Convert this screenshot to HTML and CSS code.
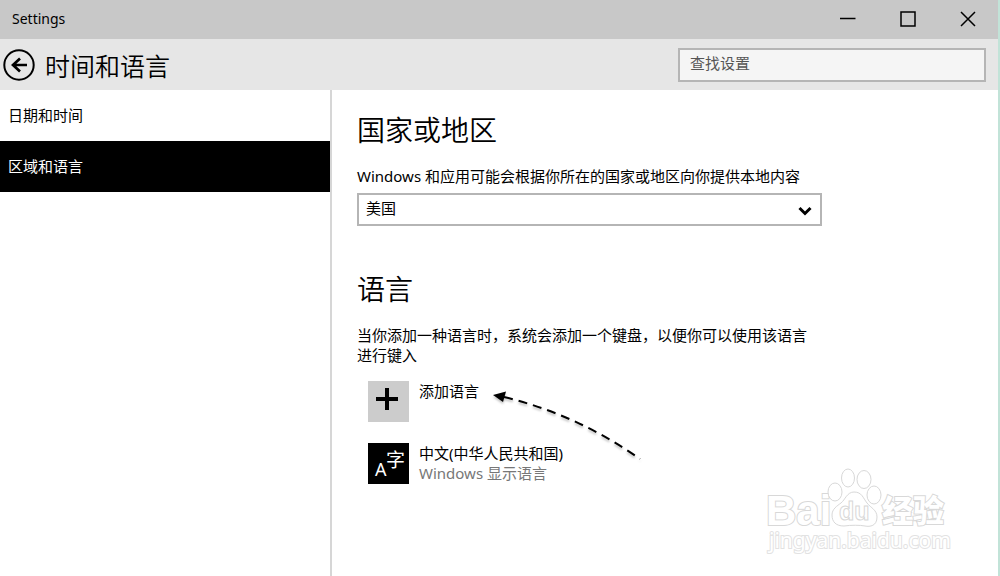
FILE: index.html
```html
<!DOCTYPE html>
<html lang="zh-CN">
<head>
    <meta charset="UTF-8">
    <meta name="viewport" content="width=device-width, initial-scale=1.0">
    <title>Settings</title>
    <link rel="stylesheet" href="styles.css">
</head>
<body>
    <div class="window">
        <div class="titlebar">
            <span class="titlebar-text">Settings</span>
            <div class="window-buttons">
                <button type="button" aria-label="Minimize">
                    <svg width="16" height="16" viewBox="0 0 16 16"><path d="M0 7.5h15.5"/></svg>
                </button>
                <button type="button" aria-label="Maximize">
                    <svg width="16" height="16" viewBox="0 0 16 16"><path d="M1 1h14v14H1z"/></svg>
                </button>
                <button type="button" aria-label="Close">
                    <svg width="16" height="16" viewBox="0 0 16 16"><path d="M1 1l14 14M15 1L1 15"/></svg>
                </button>
            </div>
        </div>

        <header class="header">
            <button type="button" class="back" aria-label="返回">
                <svg width="32" height="32" viewBox="0 0 32 32">
                    <circle cx="16" cy="16" r="14.7" stroke-width="2"/>
                    <path d="M24 16H10M17 9.5L10 16l7 6.5" stroke-width="2.7"/>
                </svg>
            </button>
            <h1>时间和语言</h1>
            <input class="search" type="search" placeholder="查找设置" aria-label="查找设置">
        </header>

        <div class="body">
            <nav class="sidebar">
                <a href="#date">日期和时间</a>
                <a href="#region" class="active">区域和语言</a>
            </nav>

            <main class="content">
                <section class="region">
                    <h2>国家或地区</h2>
                    <label for="country">Windows 和应用可能会根据你所在的国家或地区向你提供本地内容</label>
                    <div class="select-box">
                        <select id="country">
                            <option>美国</option>
                        </select>
                        <svg class="chevron" width="14" height="10" viewBox="0 0 14 10"><path d="M1.5 2L7 7.5 12.5 2"/></svg>
                    </div>
                </section>

                <section class="language">
                    <h2>语言</h2>
                    <p>当你添加一种语言时，系统会添加一个键盘，以便你可以使用该语言进行键入</p>
                    <button type="button" class="item">
                        <span class="tile tile-add">
                            <svg width="41" height="41" viewBox="0 0 41 41"><path d="M8 18h22M19 7v22"/></svg>
                        </span>
                        <span class="item-text">添加语言</span>
                    </button>
                    <button type="button" class="item">
                        <span class="tile tile-lang">
                            <svg width="41" height="41" viewBox="0 0 41 41">
                                <text x="7" y="33" font-size="18">A</text>
                                <text x="18" y="24" font-size="19">字</text>
                            </svg>
                        </span>
                        <span class="item-text">中文(中华人民共和国)<small>Windows 显示语言</small></span>
                    </button>
                </section>

                <svg class="pointer" width="154" height="76" viewBox="0 0 154 76">
                    <path class="pointer-line" d="M12 6Q86 24 148 68"/>
                    <path d="M1 4L14 .5 11 11z"/>
                </svg>

                <svg class="watermark" width="184" height="94" viewBox="0 0 184 94">
                    <text class="wm-latin" x="0" y="59" font-size="42">Bai</text>
                    <ellipse cx="69" cy="26" rx="7" ry="9"/>
                    <ellipse cx="82" cy="12" rx="6.5" ry="9"/>
                    <ellipse cx="98" cy="13.5" rx="7" ry="9"/>
                    <ellipse cx="108" cy="29" rx="7" ry="9"/>
                    <path d="M88 26c8 0 9 6 13 11s10 7 10 14c0 9-7 10-12 9-5-1-14-1-21 0-8 0-12-4-12-11 0-6 5-9 9-12s6-11 13-11z"/>
                    <text class="wm-du" x="73" y="54" font-size="25">du</text>
                    <text class="wm-cjk" x="116" y="56" font-size="31">经验</text>
                    <text class="wm-url" x="3" y="82" font-size="21">jingyan.baidu.com</text>
                </svg>
            </main>
        </div>
    </div>
</body>
</html>
```
FILE: styles.css
```css
* {
    box-sizing: border-box;
}

body {
    margin: 0;
    font-family: "Noto Sans", "Noto Sans CJK SC", sans-serif;
    font-size: 15px;
    line-height: 20px;
    color: #000;
    background-color: #fff;
}

button, input, select {
    font: inherit;
    color: inherit;
    margin: 0;
    padding: 0;
    border: 0;
    background: none;
}

svg {
    display: block;
    fill: none;
    stroke: #000;
}

.window {
    display: flex;
    flex-direction: column;
    min-height: 100vh;
    border-right: 2px solid #c2e3d8;
}

.titlebar {
    display: flex;
    align-items: center;
    justify-content: space-between;
    height: 39px;
    padding: 0 0 2px 12px;
    background-color: #c8c8c8;
}

.titlebar-text {
    font-size: 14px;
}

.window-buttons {
    display: flex;
}

.window-buttons button {
    display: flex;
    align-items: center;
    justify-content: center;
    width: 60px;
    height: 37px;
}

.window-buttons svg {
    stroke-width: 1.5;
}

.header {
    display: flex;
    align-items: center;
    gap: 10px;
    height: 51px;
    padding: 0 12px 0 3px;
    background-color: #e6e6e6;
}

h1, h2 {
    margin: 0;
    font-family: "Noto Sans CJK SC", sans-serif;
    font-weight: 350;
}

h1 {
    flex: 1;
    font-size: 25px;
    line-height: 32px;
}

.search {
    width: 308px;
    height: 34px;
    padding: 0 10px 3px;
    border: 2px solid #b5b5b5;
    background-color: #f5f5f5;
    appearance: none;
}

.search::placeholder {
    color: #555;
}

.body {
    display: flex;
    flex: 1;
}

.sidebar {
    width: 332px;
    border-right: 2px solid #d6d6d6;
}

.sidebar a {
    display: flex;
    align-items: center;
    height: 51px;
    padding: 0 8px 2px;
    color: #000;
    text-decoration: none;
}

.sidebar .active {
    color: #fff;
    background-color: #000;
}

.content {
    position: relative;
    flex: 1;
    padding: 19px 25px;
}

.region, .language {
    max-width: 465px;
}

.language {
    margin-top: 42px;
}

h2 {
    font-size: 28px;
    line-height: 40px;
    margin-bottom: 17px;
}

.region label {
    display: block;
    white-space: nowrap;
    margin-bottom: 7px;
}

.select-box {
    position: relative;
}

.select-box select {
    display: block;
    width: 100%;
    height: 33px;
    padding: 0 30px 3px 7px;
    border: 2px solid #b5b5b5;
    background-color: #fff;
    appearance: none;
}

.chevron {
    position: absolute;
    right: 10px;
    top: 13px;
    stroke-width: 3;
    pointer-events: none;
}

.language p {
    margin: 0 0 16px;
    padding-right: 8px;
}

.item {
    display: flex;
    gap: 10px;
    margin: 0 0 21px 11px;
    text-align: left;
}

.tile {
    width: 41px;
    height: 41px;
}

.tile-add {
    background-color: #ccc;
}

.tile-add svg {
    stroke-width: 4;
}

.tile-lang {
    background-color: #000;
}

.tile-lang svg {
    fill: #fff;
    stroke: none;
}

.item-text small {
    display: block;
    font-size: 15px;
    color: #777;
}

/* hand-drawn arrow to the add button */
.pointer {
    position: absolute;
    left: 160px;
    top: 301px;
    fill: #000;
    stroke: none;
    filter: drop-shadow(0 2px 1px rgba(0, 0, 0, 0.25));
}

.pointer-line {
    fill: none;
    stroke: #000;
    stroke-width: 2;
    stroke-dasharray: 9 6;
}

.watermark {
    position: absolute;
    right: 48px;
    bottom: 16px;
    overflow: visible;
    fill: #fff;
    stroke: #d8d8d8;
    stroke-width: 1;
}

.wm-latin, .wm-du {
    font-family: "Liberation Sans", sans-serif;
    font-weight: 700;
}

.wm-cjk {
    font-family: "Noto Sans CJK SC", sans-serif;
    font-weight: 900;
}

.wm-latin, .wm-cjk, .wm-url {
    stroke-width: 2;
    paint-order: stroke;
}

.wm-url {
    font-family: "Noto Sans", sans-serif;
    stroke: #e2e2e2;
}
```
